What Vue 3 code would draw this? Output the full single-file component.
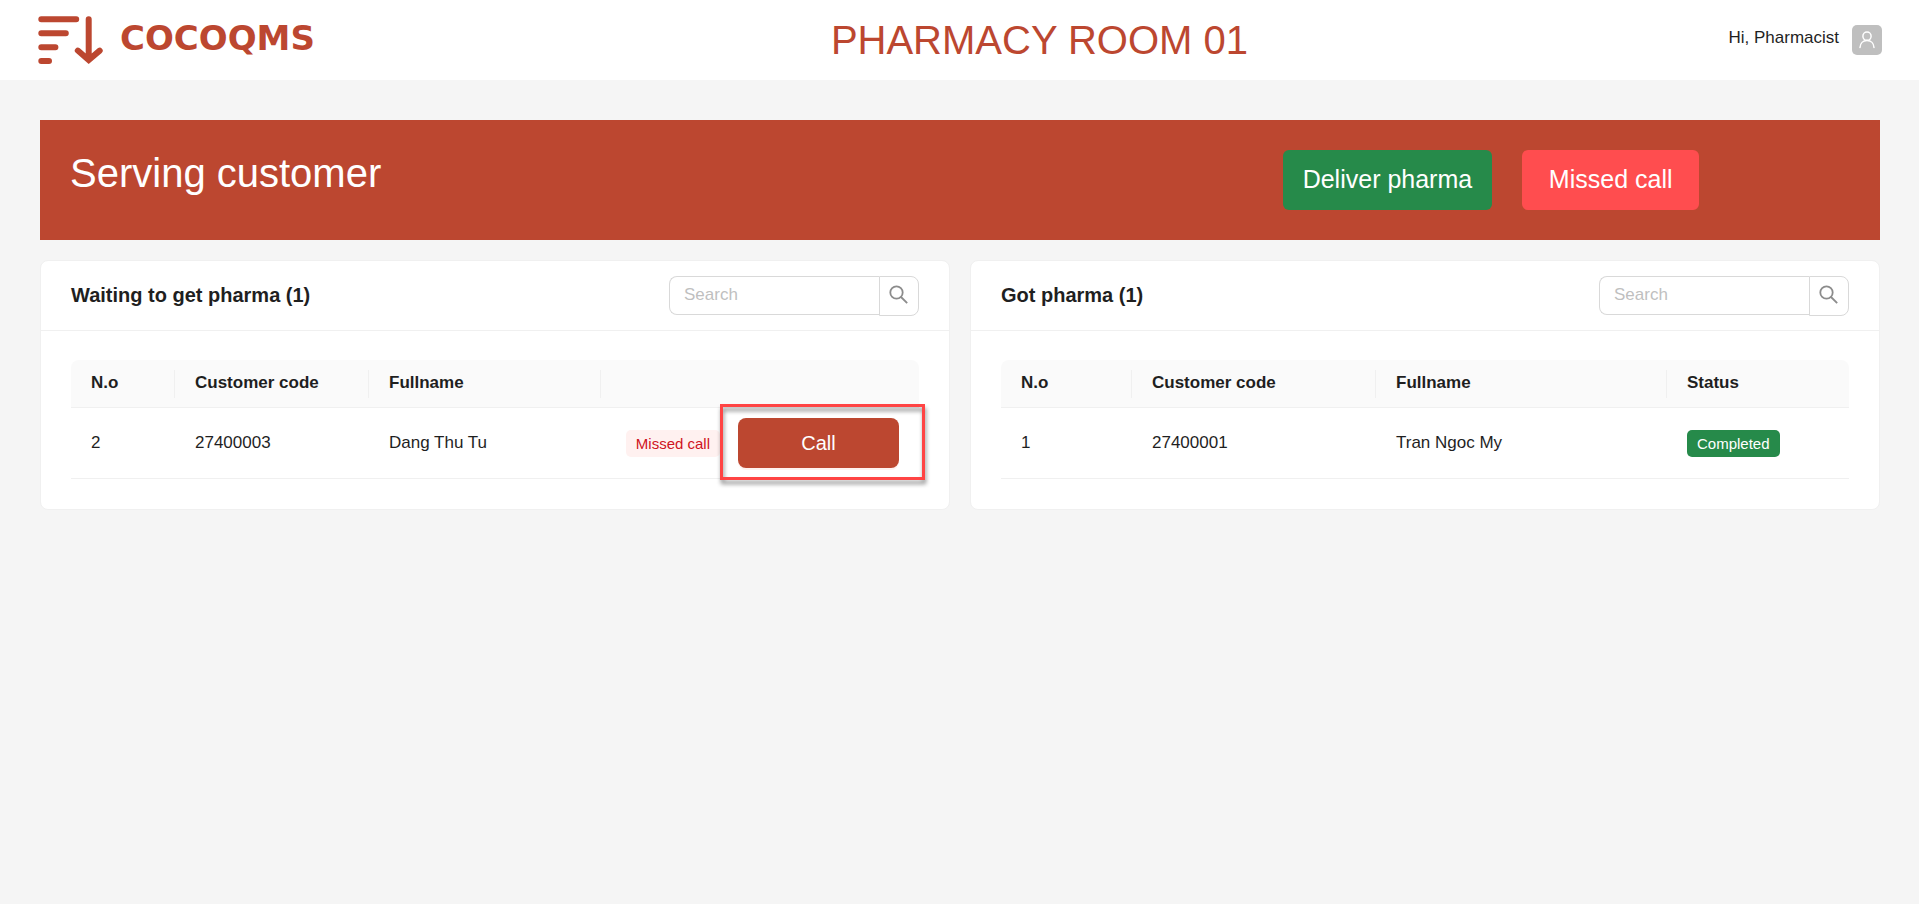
<script setup>
import { ref } from 'vue'

const waitingQuery = ref('')
const gotQuery = ref('')

const waiting = [{ no: 2, code: '27400003', name: 'Dang Thu Tu', status: 'Missed call' }]
const got = [{ no: 1, code: '27400001', name: 'Tran Ngoc My', status: 'Completed' }]
</script>

<template>
  <div class="page">
    <header class="topbar">
      <a class="brand" href="#">
        <svg class="brand-mark" width="65" height="48" viewBox="0 0 65 48" fill="none" stroke="currentColor" stroke-width="6" stroke-linecap="round" aria-hidden="true">
          <path d="M3.3 3.2H38.2M3.3 17.2H27.8M3.3 31.2H17.4M3.3 45H11" />
          <path d="M50.7 3.2V43.500M39.8 34.6l10.9 9.4 11-9.4" />
        </svg>
        <span class="brand-name">COCOQMS</span>
      </a>
      <h1 class="room">PHARMACY ROOM 01</h1>
      <div class="user">
        <span class="user-name">Hi, Pharmacist</span>
        <span class="avatar">
          <svg width="18" height="18" viewBox="0 0 18 18" fill="none" stroke="currentColor" stroke-width="1.5" stroke-linecap="round" aria-hidden="true">
            <circle cx="9" cy="5.2" r="4.1" />
            <path d="M2 16.500c.2-4.200 3-7 7-7s6.800 2.800 7 7" />
          </svg>
        </span>
      </div>
    </header>

    <main class="content">
      <section class="banner">
        <h2 class="banner-title">Serving customer</h2>
        <div class="banner-actions">
          <button type="button" class="action deliver">Deliver pharma</button>
          <button type="button" class="action missed">Missed call</button>
        </div>
      </section>

      <div class="cards">
        <section class="card">
          <div class="card-head">
            <h3 class="card-title">Waiting to get pharma (1)</h3>
            <form class="search" role="search" @submit.prevent>
              <input v-model="waitingQuery" type="text" placeholder="Search" aria-label="Search waiting customers" />
              <button type="submit" aria-label="Search">
                <svg width="19" height="19" viewBox="0 0 19 19" fill="none" stroke="currentColor" stroke-width="1.8" aria-hidden="true">
                  <circle cx="7.500" cy="7.500" r="6.200" />
                  <path d="M12 12l6.200 6.200" />
                </svg>
              </button>
            </form>
          </div>
          <div class="card-body">
            <table>
              <colgroup>
                <col class="w-no" />
                <col class="w-code" />
                <col class="w-name" />
                <col class="w-action" />
              </colgroup>
              <thead>
                <tr>
                  <th scope="col">N.o</th>
                  <th scope="col">Customer code</th>
                  <th scope="col">Fullname</th>
                  <td></td>
                </tr>
              </thead>
              <tbody>
                <tr v-for="row in waiting" :key="row.code">
                  <td>{{ row.no }}</td>
                  <td>{{ row.code }}</td>
                  <td>{{ row.name }}</td>
                  <td>
                    <div class="row-actions">
                      <span class="tag tag-missed">{{ row.status }}</span>
                      <div class="call-wrap">
                        <button type="button" class="call">Call</button>
                        <span class="highlight" aria-hidden="true"></span>
                      </div>
                    </div>
                  </td>
                </tr>
              </tbody>
            </table>
          </div>
        </section>

        <section class="card">
          <div class="card-head">
            <h3 class="card-title">Got pharma (1)</h3>
            <form class="search" role="search" @submit.prevent>
              <input v-model="gotQuery" type="text" placeholder="Search" aria-label="Search served customers" />
              <button type="submit" aria-label="Search">
                <svg width="19" height="19" viewBox="0 0 19 19" fill="none" stroke="currentColor" stroke-width="1.8" aria-hidden="true">
                  <circle cx="7.500" cy="7.500" r="6.200" />
                  <path d="M12 12l6.200 6.200" />
                </svg>
              </button>
            </form>
          </div>
          <div class="card-body">
            <table>
              <colgroup>
                <col class="g-no" />
                <col class="g-code" />
                <col class="g-name" />
                <col class="g-status" />
              </colgroup>
              <thead>
                <tr>
                  <th scope="col">N.o</th>
                  <th scope="col">Customer code</th>
                  <th scope="col">Fullname</th>
                  <th scope="col">Status</th>
                </tr>
              </thead>
              <tbody>
                <tr v-for="row in got" :key="row.code">
                  <td>{{ row.no }}</td>
                  <td>{{ row.code }}</td>
                  <td>{{ row.name }}</td>
                  <td><span class="tag tag-done">{{ row.status }}</span></td>
                </tr>
              </tbody>
            </table>
          </div>
        </section>
      </div>
    </main>
  </div>
</template>

<style>
body {
  margin: 0;
  background: #f5f5f5;
}
</style>

<style scoped>
.page,
.page * {
  box-sizing: border-box;
}

.page {
  color: #1f1f1f;
  font-family: "Liberation Sans", Arial, sans-serif;
  font-size: 17px;
  line-height: 28px;
}

h1,
h2,
h3 {
  margin: 0;
  font-weight: 400;
}

button,
input {
  margin: 0;
  font-family: inherit;
}

button {
  cursor: pointer;
}

.topbar {
  display: grid;
  grid-template-columns: 6fr 14fr 4fr;
  align-items: center;
  height: 80px;
  background: #fff;
}

.brand {
  display: flex;
  align-items: flex-start;
  gap: 17px;
  padding-left: 38px;
  color: #bc4730;
  text-decoration: none;
}

.brand-mark {
  flex: none;
}

.brand-name {
  font-family: "DejaVu Sans", sans-serif;
  font-size: 34px;
  font-weight: 700;
  line-height: 44px;
}

.room {
  color: #bc4730;
  font-size: 40px;
  line-height: 46px;
  text-align: center;
}

.user {
  display: flex;
  align-items: flex-start;
  justify-content: flex-end;
  gap: 13px;
  padding-right: 37px;
}

.user-name {
  line-height: 26px;
}

.avatar {
  display: flex;
  align-items: center;
  justify-content: center;
  width: 30px;
  height: 30px;
  border-radius: 5px;
  background: #bfbfbf;
  color: #fff;
}

.content {
  padding: 40px 39px 40px 40px;
}

.banner {
  display: grid;
  grid-template-columns: 2fr 1fr;
  background: #bc4730;
  color: #fff;
}

.banner-title {
  padding: 30px;
  font-size: 40px;
  line-height: 46px;
}

.banner-actions {
  display: flex;
  gap: 30px;
  padding: 30px 16px;
}

.action {
  height: 60px;
  padding: 0 20px 2px;
  border: 0;
  border-radius: 6px;
  color: #fff;
  font-size: 25px;
}

.deliver {
  background: #268a4a;
}

.missed {
  min-width: 177px;
  background: #ff4d4f;
}

.cards {
  display: grid;
  grid-template-columns: 1fr 1fr;
  gap: 20px;
  margin-top: 20px;
}

.card {
  border: 1px solid #f0f0f0;
  border-radius: 8px;
  background: #fff;
}

.card-head {
  display: flex;
  align-items: center;
  justify-content: space-between;
  height: 70px;
  padding: 0 30px;
  border-bottom: 1px solid #f0f0f0;
}

.card-title {
  padding-bottom: 2px;
  font-size: 20px;
  font-weight: 700;
}

.search {
  display: flex;
  align-items: flex-start;
  width: 250px;
}

.search input {
  flex: 1;
  min-width: 0;
  height: 39px;
  padding: 0 14px;
  border: 1px solid #d9d9d9;
  border-right: 0;
  border-radius: 8px 0 0 8px;
  background: #fff;
  color: #1f1f1f;
  font-size: 17px;
}

.search input::placeholder {
  color: #bfbfbf;
  opacity: 1;
}

.search button {
  display: flex;
  align-items: center;
  justify-content: center;
  width: 40px;
  height: 40px;
  padding: 0 2px 2px 0;
  border: 1px solid #d9d9d9;
  border-radius: 0 8px 8px 0;
  background: #fff;
  color: #8c8c8c;
}

.card-body {
  padding: 29px 30px 30px;
}

table {
  width: 100%;
  border-spacing: 0;
  table-layout: fixed;
}

.w-no { width: 104px; }
.w-code { width: 194px; }
.w-name { width: 232px; }
.w-action { width: 318px; }

.g-no { width: 131px; }
.g-code { width: 244px; }
.g-name { width: 291px; }
.g-status { width: 182px; }

th,
td {
  height: 71px;
  padding: 10px 20px;
  border-bottom: 1px solid #f0f0f0;
  text-align: left;
}

thead th,
thead td {
  position: relative;
  height: 48px;
  padding: 9px 20px 10px;
  background: #fafafa;
  font-weight: 700;
}

thead tr > :first-child {
  border-top-left-radius: 8px;
}

thead tr > :last-child {
  border-top-right-radius: 8px;
}

thead tr > :not(:last-child)::after {
  content: "";
  position: absolute;
  top: 10px;
  right: 0;
  width: 1px;
  height: 28px;
  background: #f0f0f0;
}

.row-actions {
  display: flex;
  align-items: center;
  justify-content: flex-end;
  gap: 18px;
}

.tag {
  display: inline-block;
  padding: 0 10px;
  border-radius: 5px;
  font-size: 15px;
  line-height: 27px;
  white-space: nowrap;
  vertical-align: middle;
}

.tag-missed {
  background: #fff1f0;
  color: #cf1322;
}

.tag-done {
  background: #268a4a;
  color: #fff;
}

.call-wrap {
  position: relative;
}

.call {
  display: block;
  width: 161px;
  height: 50px;
  border: 0;
  border-radius: 8px;
  background: #bc4730;
  box-shadow: 0 2px 0 rgba(255, 38, 5, 0.06);
  color: #fff;
  font-size: 20px;
}

.highlight {
  position: absolute;
  inset: -14px -26px -12px -18px;
  border: 3px solid #ff4444;
  filter: drop-shadow(1px 4px 2px rgba(0, 0, 0, 0.45));
  pointer-events: none;
}
</style>
